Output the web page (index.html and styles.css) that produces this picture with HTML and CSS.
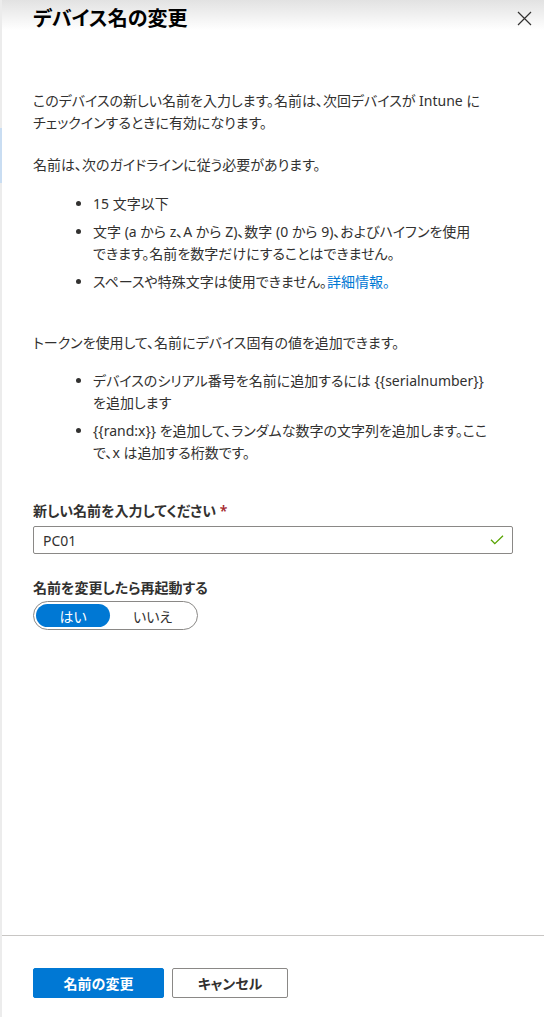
FILE: index.html
```html
<!DOCTYPE html>
<html lang="ja">
<head>
<meta charset="utf-8">
<title>デバイス名の変更</title>
<link rel="stylesheet" href="styles.css">
</head>
<body>
<div class="blade">
  <header class="head">
    <h1 class="title">デバイス名の変更</h1>
    <button class="close" aria-label="閉じる">
      <svg width="15" height="15" viewBox="0 0 15 15"><path d="M1 1 L14 14 M14 1 L1 14" stroke="#323130" stroke-width="1.2" fill="none"/></svg>
    </button>
  </header>
  <main class="content">
    <p class="para">このデバイスの新しい名前を入力します。名前は、次回デバイスが Intune に<br>チェックインするときに有効になります。</p>
    <p class="para p-guide">名前は、次のガイドラインに従う必要があります。</p>
    <ul class="list list-guide">
      <li>15 文字以下</li>
      <li>文字 (a から z、A から Z)、数字 (0 から 9)、およびハイフンを使用<br>できます。名前を数字だけにすることはできません。</li>
      <li>スペースや特殊文字は使用できません。<a class="link" href="#">詳細情報。</a></li>
    </ul>
    <p class="para p-token">トークンを使用して、名前にデバイス固有の値を追加できます。</p>
    <ul class="list list-token">
      <li>デバイスのシリアル番号を名前に追加するには {{serialnumber}}<br>を追加します</li>
      <li>{{rand:x}} を追加して、ランダムな数字の文字列を追加します。ここ<br>で、x は追加する桁数です。</li>
    </ul>
    <div class="field field-name">
      <label class="label" for="name">新しい名前を入力してください <span class="req">*</span></label>
      <div class="input">
        <span class="input-text">PC01</span>
        <svg class="check" width="14" height="10" viewBox="0 0 14 10"><polyline points="1,4.8 4.8,8.6 13,0.8" stroke="#57a300" stroke-width="1.3" fill="none"/></svg>
      </div>
    </div>
    <div class="field field-restart">
      <span class="label">名前を変更したら再起動する</span>
      <div class="toggle">
        <span class="opt opt-on">はい</span>
        <span class="opt">いいえ</span>
      </div>
    </div>
  </main>
  <footer class="foot">
    <button class="btn btn-primary">名前の変更</button>
    <button class="btn btn-default">キャンセル</button>
  </footer>
</div>
</body>
</html>
```
FILE: styles.css
```css
html, body {
  margin: 0;
  padding: 0;
}
body {
  width: 544px;
  height: 1017px;
  overflow: hidden;
  background: linear-gradient(to bottom, #ececec 0, #ececec 128px, #c9ddf2 128px, #c9ddf2 183px, #ececec 183px);
  font-family: "Noto Sans", "Noto Sans CJK JP", sans-serif;
  font-feature-settings: "palt" 1;
  color: #323130;
  font-size: 14px;
}
.blade {
  margin-left: 2px;
  height: 1017px;
  display: flex;
  flex-direction: column;
  background: linear-gradient(to bottom, #e2e2e2 0, #ffffff 30px);
}
.head {
  display: flex;
  justify-content: space-between;
  align-items: flex-start;
  padding: 5px 12px 0 31px;
}
.title {
  margin: 0;
  font-size: 20px;
  line-height: 28px;
  font-weight: 600;
  color: #000;
}
.close {
  border: 0;
  background: none;
  padding: 0;
  margin-top: 6px;
  width: 15px;
  height: 15px;
  display: flex;
}
.content {
  flex: 1;
  padding: 57px 31px 0 31px;
}
.para {
  margin: 0;
  line-height: 22px;
}
.p-guide { margin-top: 20px; }
.p-token { margin-top: 39px; }
.list {
  margin: 17px 0 0 0;
  padding-left: 60px;
  line-height: 22px;
}
.list-token { margin-top: 16px; }
.list li + li { margin-top: 6px; }
.link {
  color: #0078d4;
  text-decoration: none;
}
.field-name { margin-top: 37px; }
.field-restart { margin-top: 24px; }
.label {
  display: block;
  line-height: 20px;
  font-weight: 600;
  color: #323130;
}
.req { color: #a4262c; }
.input {
  margin-top: 5px;
  height: 28px;
  box-sizing: border-box;
  border: 1px solid #8a8886;
  border-radius: 2px;
  display: flex;
  align-items: center;
  justify-content: space-between;
  padding: 0 8px 0 9px;
  background: #fff;
}
.input-text {
  font-size: 14px;
  color: #323130;
}
.toggle {
  margin-top: 3px;
  width: 165px;
  height: 29px;
  box-sizing: border-box;
  border: 1px solid #8a8886;
  border-radius: 15px;
  padding: 2px;
  display: flex;
  align-items: stretch;
}
.opt {
  flex: 1;
  display: flex;
  align-items: center;
  justify-content: center;
  font-size: 14px;
  color: #323130;
  border-radius: 12px;
}
.opt-on {
  flex: 0 0 74px;
  background: #0078d4;
  color: #fff;
}
.foot {
  border-top: 1px solid #c8c6c4;
  padding: 32px 0 19px 31px;
  display: flex;
  gap: 8px;
  background: #fff;
}
.btn {
  height: 30px;
  box-sizing: border-box;
  border-radius: 2px;
  font-family: inherit;
  font-feature-settings: "palt" 1;
  font-size: 14px;
  font-weight: 600;
  padding: 0;
  display: flex;
  align-items: center;
  justify-content: center;
}
.btn-primary {
  width: 131px;
  background: #0078d4;
  border: 1px solid #0078d4;
  color: #fff;
}
.btn-default {
  width: 116px;
  background: #fff;
  border: 1px solid #8a8886;
  color: #323130;
}
```
